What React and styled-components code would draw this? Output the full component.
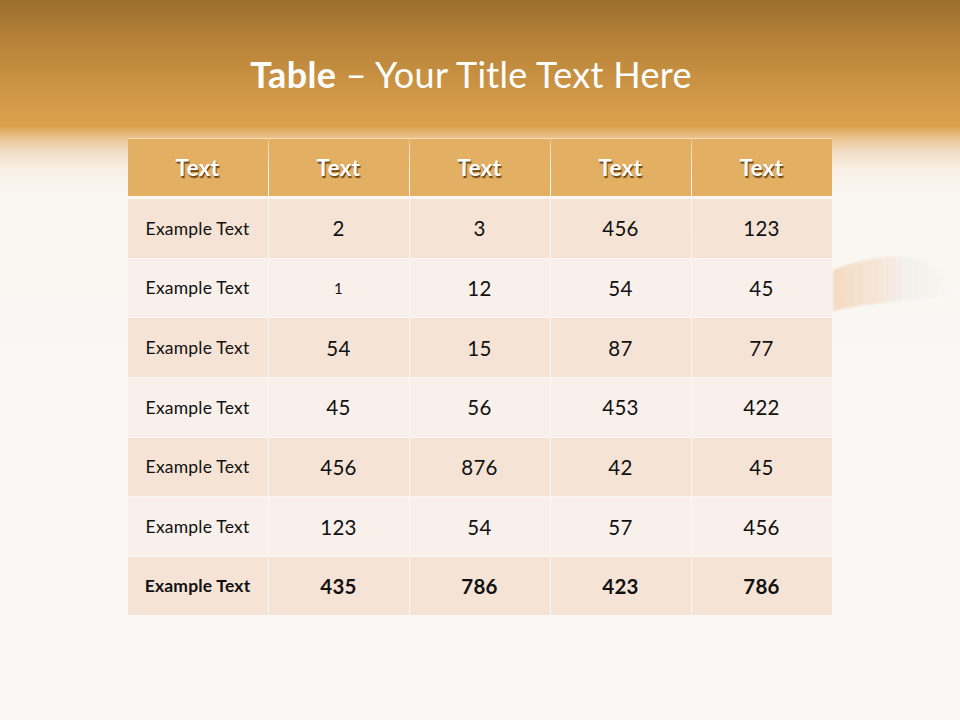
import React from "react";
import styled, { createGlobalStyle } from "styled-components";

const Global = createGlobalStyle`
  html, body { margin: 0; padding: 0; }
  body { width: 960px; height: 720px; overflow: hidden; font-family: Lato, "Open Sans", sans-serif; }
`;

const Slide = styled.div`
  position: relative;
  width: 960px;
  height: 720px;
  overflow: hidden;
  display: flex;
  flex-direction: column;
  align-items: center;
  background: linear-gradient(
    to bottom,
    #9b6f2e 0px,
    #b9843a 45px,
    #d29a48 100px,
    #dba24c 126px,
    #e6b97c 134px,
    #f1dcc2 150px,
    #f8efe5 170px,
    #faf7f3 195px,
    #faf8f5 720px
  );
`;

const Title = styled.h1`
  margin: 0 18px 0 0;
  height: 138px;
  box-sizing: border-box;
  padding-top: 51px;
  font-family: Lato, "Open Sans", sans-serif;
  font-weight: 400;
  font-size: 36px;
  line-height: 46px;
  color: #ffffff;
  letter-spacing: 0.3px;
  b { font-weight: 700; }
`;

const Table = styled.div`
  position: relative;
  z-index: 1;
  display: grid;
  grid-template-columns: repeat(5, 140px);
  column-gap: 1px;
  width: 704px;
  margin-left: -1px;
`;

const HeaderRow = styled.div`
  display: contents;
`;

const HeadCell = styled.div`
  height: 57px;
  margin-top: 1px;
  margin-bottom: 3px;
  background: #e3af63;
  box-shadow: 0 -1px 0 #f6dcb7;
  display: flex;
  align-items: center;
  justify-content: center;
  font-family: Lato, "Open Sans", sans-serif;
  font-weight: 700;
  font-size: 22px;
  letter-spacing: 0.5px;
  color: #ffffff;
  text-shadow: 1px 1.5px 1px rgba(80, 48, 8, 0.85);
`;

const Cell = styled.div`
  height: ${(p) => (p.$last ? "58px" : "58.67px")};
  margin-bottom: 1px;
  background: ${(p) => (p.$alt ? "#f9f0eb" : "#f5e4d6")};
  display: flex;
  align-items: center;
  justify-content: center;
  font-family: Lato, "Open Sans", sans-serif;
  font-weight: ${(p) => (p.$bold ? 700 : 400)};
  font-size: ${(p) => (p.$label ? "17.5px" : p.$small ? "15px" : "20.5px")};
  letter-spacing: ${(p) => (p.$label ? "0.2px" : "0.3px")};
  color: #111111;
`;

const Swoosh = styled.svg`
  position: absolute;
  left: 828px;
  top: 250px;
  width: 132px;
  height: 70px;
  filter: blur(0.8px);
`;

const head = ["Text", "Text", "Text", "Text", "Text"];
const rows = [
  ["Example Text", "2", "3", "456", "123"],
  ["Example Text", "1", "12", "54", "45"],
  ["Example Text", "54", "15", "87", "77"],
  ["Example Text", "45", "56", "453", "422"],
  ["Example Text", "456", "876", "42", "45"],
  ["Example Text", "123", "54", "57", "456"],
  ["Example Text", "435", "786", "423", "786"],
];

export default function App() {
  return (
    <>
      <Global />
      <Slide>
        <Swoosh viewBox="0 0 132 70">
          <defs>
            <linearGradient id="sw" x1="0" y1="0" x2="1" y2="0">
              <stop offset="0" stopColor="#f2d2b6" stopOpacity="0.8" />
              <stop offset="0.35" stopColor="#f5dcc8" stopOpacity="0.65" />
              <stop offset="0.6" stopColor="#eeebe7" stopOpacity="0.55" />
              <stop offset="1" stopColor="#f4f1ee" stopOpacity="0.1" />
            </linearGradient>
          </defs>
          <path
            d="M5 20 C 30 10, 60 4, 85 8 C 105 12, 120 28, 129 47 C 110 45, 80 50, 55 53 C 35 55, 18 58, 5 61 Z"
            fill="url(#sw)"
          />
        </Swoosh>
        <Title>
          <b>Table</b> – Your Title Text Here
        </Title>
        <Table>
          <HeaderRow>
            {head.map((h, i) => (
              <HeadCell key={i}>{h}</HeadCell>
            ))}
          </HeaderRow>
          {rows.map((r, ri) =>
            r.map((c, ci) => (
              <Cell
                key={ri + "-" + ci}
                $alt={ri % 2 === 1 && ri !== 6}
                $label={ci === 0}
                $bold={ri === 6}
                $small={ri === 1 && ci === 1}
                $last={ri === 6}
              >
                {c}
              </Cell>
            ))
          )}
        </Table>
      </Slide>
    </>
  );
}
